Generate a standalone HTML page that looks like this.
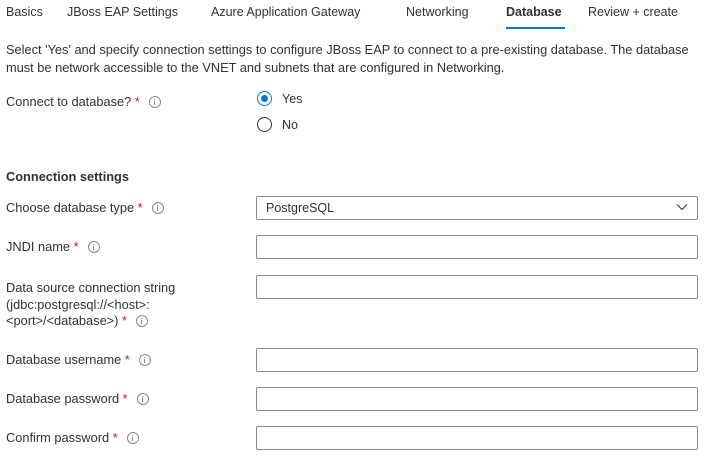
<!DOCTYPE html>
<html><head><meta charset="utf-8"><style>
body{margin:0;width:711px;height:464px;background:#fff;font-family:"Liberation Sans",sans-serif;font-size:12.5px;color:#323130;position:relative;overflow:hidden}
.a{position:absolute;white-space:nowrap;line-height:16px}
.l{font-size:12.8px}
.box{position:absolute;left:256px;width:440px;height:22px;border:1px solid #8a8886;border-radius:2px;box-sizing:content-box}
.s{color:#a4262c}
.i{display:inline-block;width:12px;height:12px;border:1px solid #8a8886;border-radius:50%;box-sizing:border-box;vertical-align:-2px;margin-left:9px;position:relative}
.i:after{content:"";position:absolute;left:4.5px;top:4px;width:1px;height:4px;background:#8a8886}
.i:before{content:"";position:absolute;left:4.5px;top:2px;width:1px;height:1px;background:#8a8886}
.r{position:absolute;width:15px;height:15px;border-radius:50%;box-sizing:border-box}
</style></head><body>
<div class="a" style="left:6px;top:4px">Basics</div>
<div class="a" style="left:67px;top:4px">JBoss EAP Settings</div>
<div class="a" style="left:211px;top:4px">Azure Application Gateway</div>
<div class="a" style="left:406px;top:4px">Networking</div>
<div class="a" style="left:506px;top:4px;font-weight:bold">Database</div>
<div style="position:absolute;left:506px;top:27px;width:59px;height:2px;background:#0078d4"></div>
<div class="a" style="left:588px;top:4px">Review + create</div>
<div class="a" style="left:6px;top:42px;font-size:12.8px">Select 'Yes' and specify connection settings to configure JBoss EAP to connect to a pre-existing database. The database</div>
<div class="a" style="left:6px;top:60px;font-size:12.8px">must be network accessible to the VNET and subnets that are configured in Networking.</div>
<div class="a l" style="left:6px;top:94px">Connect to database? <span class="s">*</span><span class="i"></span></div>
<div class="r" style="left:257px;top:91px;border:1px solid #0078d4"><div style="position:absolute;left:3px;top:3px;width:7px;height:7px;border-radius:50%;background:#0078d4"></div></div>
<div class="a" style="left:282px;top:91px">Yes</div>
<div class="r" style="left:257px;top:117px;border:1px solid #323130"></div>
<div class="a" style="left:282px;top:117px">No</div>
<div class="a l" style="left:6px;top:169px;font-weight:bold">Connection settings</div>
<div class="a l" style="left:6px;top:200px">Choose database type <span class="s">*</span><span class="i"></span></div>
<div class="box" style="top:196px"></div>
<div class="a" style="left:266px;top:200px">PostgreSQL</div>
<svg style="position:absolute;left:676px;top:203px" width="12" height="8"><path d="M1 1.5 L6 6.5 L11 1.5" fill="none" stroke="#323130" stroke-width="1"/></svg>
<div class="a l" style="left:6px;top:239px">JNDI name <span class="s">*</span><span class="i"></span></div>
<div class="box" style="top:235px"></div>
<div class="a l" style="left:6px;top:280px">Data source connection string</div>
<div class="a l" style="left:6px;top:297px">(jdbc:postgresql://&lt;host&gt;:</div>
<div class="a l" style="left:6px;top:313px">&lt;port&gt;/&lt;database&gt;) <span class="s">*</span><span class="i"></span></div>
<div class="box" style="top:275px"></div>
<div class="a l" style="left:6px;top:352px">Database username <span class="s">*</span><span class="i"></span></div>
<div class="box" style="top:348px"></div>
<div class="a l" style="left:6px;top:391px">Database password <span class="s">*</span><span class="i"></span></div>
<div class="box" style="top:387px"></div>
<div class="a l" style="left:6px;top:430px">Confirm password <span class="s">*</span><span class="i"></span></div>
<div class="box" style="top:426px"></div>
</body></html>
